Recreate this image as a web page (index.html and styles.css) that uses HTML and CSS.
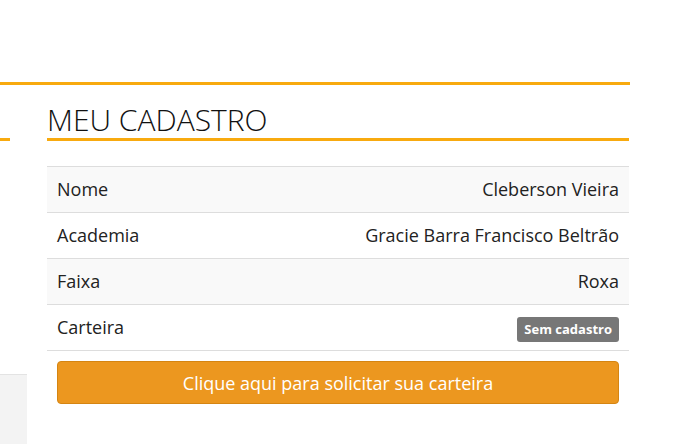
FILE: index.html
```html
<!DOCTYPE html>
<html lang="pt-BR">

<head>
    <meta charset="UTF-8">
    <meta name="viewport" content="width=device-width, initial-scale=1.0">
    <title>Meu Cadastro</title>
    <link rel="stylesheet" href="styles.css">
</head>

<body>
    <div class="topbar"></div>

    <div class="page">
        <div class="side">
            <div class="side-title"></div>
            <div class="side-panel"></div>
        </div>

        <div class="main">
            <h2 class="section-title">MEU CADASTRO</h2>

            <table class="info-table">
                <tr>
                    <td>Nome</td>
                    <td class="value">Cleberson Vieira</td>
                </tr>
                <tr>
                    <td>Academia</td>
                    <td class="value">Gracie Barra Francisco Beltrão</td>
                </tr>
                <tr>
                    <td>Faixa</td>
                    <td class="value">Roxa</td>
                </tr>
                <tr>
                    <td>Carteira</td>
                    <td class="value"><span class="label">Sem cadastro</span></td>
                </tr>
            </table>

            <div class="actions">
                <a href="#" class="btn-warning">Clique aqui para solicitar sua carteira</a>
            </div>
        </div>
    </div>
</body>

</html>
```

FILE: styles.css
```css
body {
    margin: 0;
    font-family: 'Open Sans', sans-serif;
    color: #222;
    background: #fff;
}

.topbar {
    width: 630px;
    height: 82px;
    border-bottom: 3px solid #f8aa0f;
}

.page {
    display: flex;
    gap: 20px;
    width: 629px;
}

.side {
    width: 27px;
    display: flex;
    flex-direction: column;
}

.side-title {
    height: 34px;
    margin-top: 19px;
    margin-right: 17px;
    border-bottom: 3px solid #f8aa0f;
}

.side-panel {
    margin-top: 233px;
    height: 80px;
    background: #f3f3f3;
    border-top: 1px solid #e3e3e3;
}

.main {
    flex: 1;
}

.section-title {
    margin: 19px 0 25px;
    padding-bottom: 3px;
    font-size: 30px;
    font-weight: 300;
    line-height: 31px;
    color: #111;
    border-bottom: 3px solid #f8aa0f;
}

.info-table {
    width: 100%;
    border-collapse: collapse;
    font-size: 18px;
}

.info-table td {
    padding: 11px 10px 12px;
    line-height: 22px;
    border-top: 1px solid #ddd;
}

.info-table tr:last-child td {
    border-bottom: 1px solid #ddd;
}

.info-table tr:nth-child(odd) {
    background: #f9f9f9;
}

.info-table .value {
    text-align: right;
}

.label {
    display: inline-block;
    margin: 1px 0 -4px;
    padding: 6px 7px;
    font-size: 13px;
    font-weight: bold;
    line-height: 13px;
    color: #fff;
    background: #777;
    border-radius: 3px;
    vertical-align: top;
}

.actions {
    padding: 10px 10px 0;
}

.btn-warning {
    display: block;
    padding: 10px 12px 9px;
    font-size: 18px;
    line-height: 22px;
    text-align: center;
    text-decoration: none;
    color: #fff;
    background: #ec971f;
    border: 1px solid #d58512;
    border-radius: 4px;
}
```
